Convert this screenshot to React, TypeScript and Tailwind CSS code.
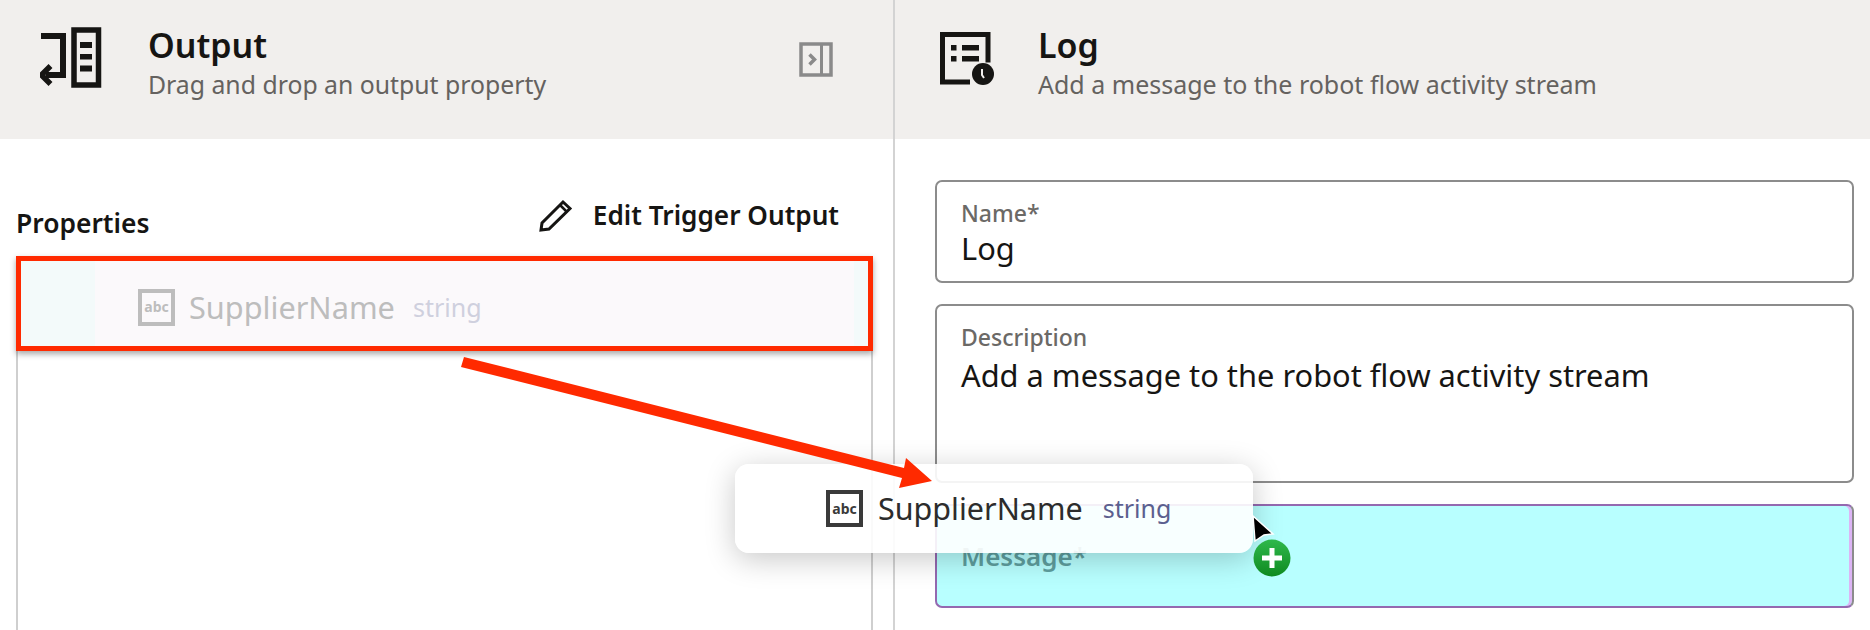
const font = "font-['Noto_Sans','Open_Sans',sans-serif]";

function OutputIcon() {
  return (
    <svg width="62" height="62" viewBox="0 0 62 62" fill="none" className="shrink-0">
      <rect x="34" y="3" width="24.500" height="55" stroke="#161513" strokeWidth="5.500" />
      <path d="M40 15h12v6H40zM40 27h12v5.500H40zM40 38.500h12v6H40z" fill="#161513" />
      <path d="M1 9h22v39H6" stroke="#161513" strokeWidth="6" />
      <path d="M10.500 39l-9 9 9 9" stroke="#161513" strokeWidth="5.500" />
    </svg>
  );
}

function LogIcon() {
  return (
    <svg width="60" height="56" viewBox="0 0 60 56" fill="none" className="shrink-0">
      <path d="M30 50H2.500V2.500h45.500v28" stroke="#161513" strokeWidth="5" />
      <path d="M11 13h5.500v5.500H11zM22 13h17v5.500H22zM11 24h5.500v5.500H11zM22 24h17v5.500H22z" fill="#161513" />
      <circle cx="43" cy="42" r="11" fill="#161513" />
      <path d="M42 37v6l2 3" stroke="#f1efed" strokeWidth="2" />
    </svg>
  );
}

function CollapseIcon() {
  return (
    <svg width="34" height="35" viewBox="0 0 34 35" fill="none" className="shrink-0">
      <rect x="2" y="2" width="30" height="31" stroke="#8a8a8a" strokeWidth="3.500" />
      <path d="M22.500 2v31" stroke="#8a8a8a" strokeWidth="3" />
      <path d="M10.500 12.500l5 5-5 5" stroke="#8a8a8a" strokeWidth="3.500" />
    </svg>
  );
}

function PencilIcon() {
  return (
    <svg width="34" height="33" viewBox="0 0 34 33" fill="none" className="shrink-0">
      <path d="M2 31l1-7L24 3l7 6.500L10 30z" stroke="#161513" strokeWidth="3" strokeLinejoin="miter" />
      <path d="M21 6l7 7" stroke="#161513" strokeWidth="2.500" />
    </svg>
  );
}

function AbcIcon({ color }: { color: string }) {
  return (
    <div
      className="flex h-[37px] w-[37px] shrink-0 items-center justify-center border-4 bg-transparent text-[14px] font-bold leading-none"
      style={{ borderColor: color, color }}
    >
      abc
    </div>
  );
}

function Field({
  label,
  value,
  valueClass,
  className,
}: {
  label: string;
  value: string;
  valueClass: string;
  className: string;
}) {
  return (
    <div className={`rounded-[7px] border-2 border-[#8c8c8c] bg-white pl-[24px] pt-[17px] ${className}`}>
      <div className="text-[23px] font-medium leading-[28px] text-[#6b6966]">{label}</div>
      <div className={`text-[30.800px] leading-[40px] text-[#161513] ${valueClass}`}>{value}</div>
    </div>
  );
}

export default function App() {
  return (
    <div className={`relative flex h-[630px] w-[1870px] overflow-hidden bg-white ${font}`}>
      {/* left panel */}
      <div className="flex w-[895px] shrink-0 flex-col border-r-2 border-[#d3d3d3]">
        <div className="flex h-[139px] shrink-0 items-start bg-[#f1efed] pl-[40px] pr-[60px] pt-[27px]">
          <OutputIcon />
          <div className="ml-[46px] flex-1">
            <div className="text-[34px] font-[560] leading-[36px] text-[#161513]">Output</div>
            <div className="mt-[4px] text-[24.800px] leading-[34px] text-[#65625f]">Drag and drop an output property</div>
          </div>
          <div className="mt-[15px]">
            <CollapseIcon />
          </div>
        </div>

        <div className="flex items-end justify-between pl-[16px] pr-[54px] pt-[59px]">
          <div className="translate-y-[-18px] text-[26.400px] font-[560] leading-[32px] text-[#161513]">Properties</div>
          <div className="mb-[25px] flex items-center gap-[20px]">
            <PencilIcon />
            <span className="text-[26.200px] font-[560] leading-[34px] text-[#161513]">Edit Trigger Output</span>
          </div>
        </div>

        <div className="ml-[16px] mr-[20px] flex-1 border-x-2 border-[#cfcfcf]">
          <div className="-ml-[2px] -mr-[2px] -mt-[1px] flex h-[95px] border-[5px] border-[#ff2a00] bg-[#fbf9fb] shadow-[0_3px_6px_rgba(0,0,0,0.35)]">
            <div className="w-[74px] shrink-0 bg-[#f3fafa]" />
            <div className="flex flex-1 items-center gap-[14px] pl-[43px] pt-[7px]">
              <AbcIcon color="#bdbdbd" />
              <span className="text-[30.700px] leading-none text-[#bdbdbd]">SupplierName</span>
              <span className="ml-[4px] text-[25px] leading-none text-[#cfd0de]">string</span>
            </div>
            <div className="w-[14px] shrink-0 bg-[#f3fafa]" />
          </div>
        </div>
      </div>

      {/* right panel */}
      <div className="flex min-w-0 flex-1 flex-col">
        <div className="flex h-[139px] shrink-0 items-start bg-[#f1efed] pl-[45px] pt-[27px]">
          <div className="mt-[5px]">
            <LogIcon />
          </div>
          <div className="ml-[38px]">
            <div className="text-[34px] font-[560] leading-[36px] text-[#161513]">Log</div>
            <div className="mt-[4px] text-[25px] leading-[34px] text-[#65625f]">Add a message to the robot flow activity stream</div>
          </div>
        </div>
        <div className="flex flex-col gap-[21px] pl-[40px] pr-[16px] pt-[41px]">
          <Field label="Name*" value="Log" valueClass="mt-[1px]" className="h-[103px]" />
          <Field
            label="Description"
            value="Add a message to the robot flow activity stream"
            valueClass="mt-[4px]"
            className="h-[179px]"
          />
          <div className="h-[104px] rounded-[7px] border-2 border-[#9469b0] border-r-[#8c8c8c] bg-[#b8ffff] pl-[24px] pt-[33px] shadow-[inset_-3px_0_0_#dcb4f5]">
            <div className="text-[26px] font-semibold leading-[34px] text-[#5f9f9f]">Message*</div>
          </div>
        </div>
      </div>

      {/* dragged property */}
      <div className="absolute left-[735px] top-[464px] flex h-[89px] w-[518px] items-center gap-[15px] rounded-[14px] bg-white/90 pl-[91px] shadow-[0_6px_30px_rgba(0,0,0,0.22)]">
        <AbcIcon color="#3a3a3a" />
        <span className="text-[30.500px] leading-none text-[#2c2c2c]">SupplierName</span>
        <span className="ml-[5px] text-[25px] leading-none text-[#5c5f8f]">string</span>
      </div>

      {/* annotation arrow */}
      <svg className="absolute left-[450px] top-[350px]" width="490" height="145" viewBox="450 350 490 145">
        <path d="M464 357L461 367L902 478L899 488L932 481L906 458L904 468Z" fill="#ff2a00" />
      </svg>

      {/* cursor */}
      <svg className="absolute left-[1245px] top-[510px]" width="50" height="70" viewBox="1245 510 50 70">
        <path d="M1253 516L1273 534L1264 535L1255 541Z" fill="#000" stroke="#fff" strokeWidth="1.500" />
        <defs>
          <linearGradient id="plusGreen" x1="0" y1="0" x2="0" y2="1">
            <stop offset="0" stopColor="#2fb84c" />
            <stop offset="1" stopColor="#0e8a20" />
          </linearGradient>
        </defs>
        <circle cx="1272" cy="558" r="18.500" fill="url(#plusGreen)" />
        <path d="M1272 548v20M1262 558h20" stroke="#fff" strokeWidth="5" />
      </svg>
    </div>
  );
}
